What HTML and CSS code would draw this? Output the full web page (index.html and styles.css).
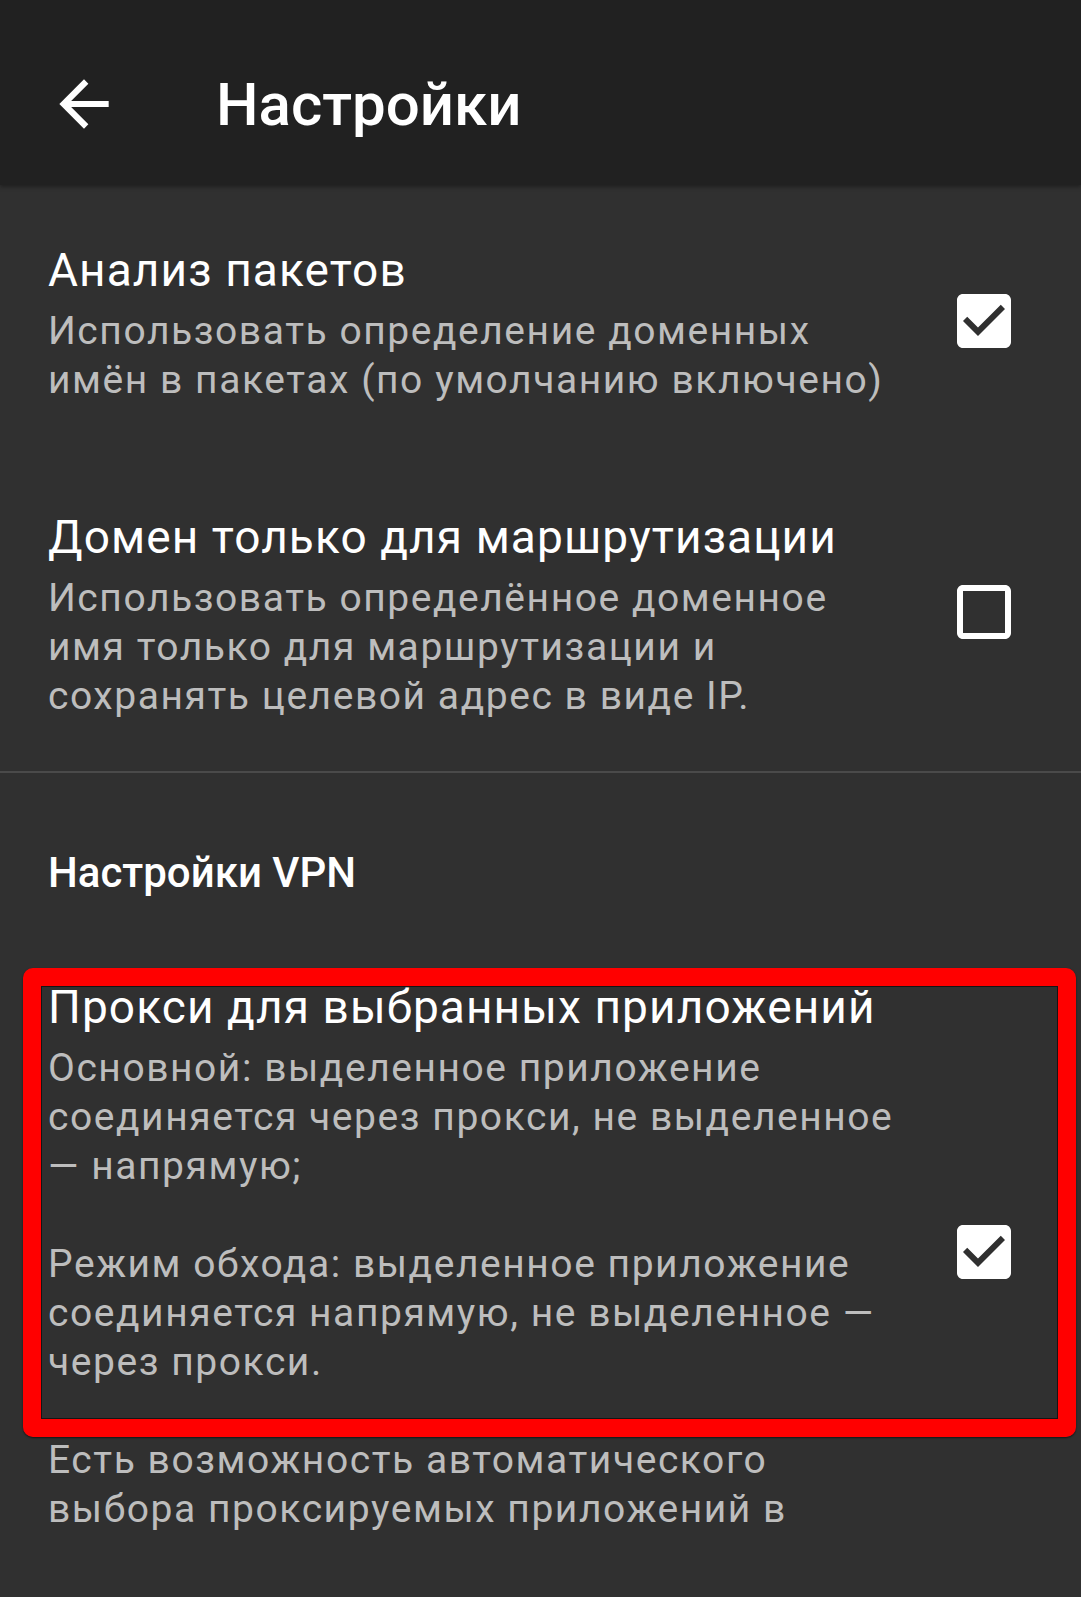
FILE: index.html
```html
<!DOCTYPE html>
<html lang="ru">
<head>
<meta charset="utf-8">
<title>Настройки</title>
<link rel="stylesheet" href="styles.css">
</head>
<body>
<div class="screen">
  <header class="toolbar">
    <span class="back" aria-label="Назад">
      <svg viewBox="0 0 24 24" width="74" height="74"><path d="M20 11H7.83l5.59-5.59L12 4l-8 8 8 8 1.41-1.41L7.83 13H20v-2z" fill="#fff"/></svg>
    </span>
    <h1 class="toolbar-title">Настройки</h1>
  </header>

  <main class="prefs">
    <div class="pref pref-first">
      <div class="pref-text">
        <div class="pref-title">Анализ пакетов</div>
        <div class="pref-summary">Использовать определение доменных имён в пакетах (по умолчанию включено)</div>
      </div>
      <svg class="checkbox" viewBox="0 0 24 24" width="72" height="72"><path fill-rule="evenodd" fill="#fff" d="M19 3H5c-1.11 0-2 .9-2 2v14c0 1.1.89 2 2 2h14c1.11 0 2-.9 2-2V5c0-1.1-.89-2-2-2zm-9 14l-5-5 1.41-1.41L10 14.17l7.59-7.59L19 8l-9 9z"/></svg>
    </div>

    <div class="pref pref-last">
      <div class="pref-text">
        <div class="pref-title">Домен только для маршрутизации</div>
        <div class="pref-summary">Использовать определённое доменное имя только для маршрутизации и сохранять целевой адрес в виде IP.</div>
      </div>
      <svg class="checkbox" viewBox="0 0 24 24" width="72" height="72"><path fill-rule="evenodd" fill="#fff" d="M19 5v14H5V5h14m0-2H5c-1.11 0-2 .9-2 2v14c0 1.1.89 2 2 2h14c1.1 0 2-.9 2-2V5c0-1.1-.9-2-2-2z"/></svg>
    </div>

    <div class="divider"></div>

    <div class="category">Настройки VPN</div>

    <div class="pref pref-tall">
      <div class="pref-text">
        <div class="pref-title">Прокси для выбранных приложений</div>
        <div class="pref-summary">
          <p class="para">Основной: выделенное приложение соединяется через прокси, не выделенное — напрямую;</p>
          <p class="para">Режим обхода: выделенное приложение соединяется напрямую, не выделенное — через прокси.</p>
          <p class="para">Есть возможность автоматического<br>выбора проксируемых приложений в</p>
        </div>
      </div>
      <svg class="checkbox checkbox-tall" viewBox="0 0 24 24" width="72" height="72"><path fill-rule="evenodd" fill="#fff" d="M19 3H5c-1.11 0-2 .9-2 2v14c0 1.1.89 2 2 2h14c1.11 0 2-.9 2-2V5c0-1.1-.89-2-2-2zm-9 14l-5-5 1.41-1.41L10 14.17l7.59-7.59L19 8l-9 9z"/></svg>
    </div>
  </main>

  <div class="highlight"></div>
</div>
</body>
</html>
```

FILE: styles.css
```css
* { box-sizing: border-box; }

html, body {
  margin: 0;
  padding: 0;
  background: #303030;
  overflow: hidden;
}

body {
  font-family: Roboto, "Noto Sans", "DejaVu Sans", sans-serif;
  color: #fff;
}

.screen {
  position: relative;
  width: 1081px;
  height: 1597px;
  overflow: hidden;
}

.toolbar {
  height: 185px;
  background: #212121;
  display: flex;
  align-items: center;
  padding: 24px 0 0 47px;
  box-shadow: 0 2px 4px rgba(0, 0, 0, 0.35);
  position: relative;
  z-index: 1;
}

.back {
  display: flex;
  width: 74px;
  height: 74px;
  margin-bottom: 2px;
}

.toolbar-title {
  margin: 0 0 0 95px;
  font-size: 60px;
  font-weight: 500;
  line-height: 1;
  color: #fff;
}

.prefs {
  display: flex;
  flex-direction: column;
}

.pref {
  display: flex;
  align-items: center;
  padding: 52px 61px 52px 48px;
}

.pref-first { padding-top: 57px; }
.pref-last { padding-bottom: 50px; }
.pref-tall { padding-top: 78px; }

.pref-text {
  width: 847px;
  flex: none;
}

.pref-title {
  font-size: 46px;
  line-height: 56px;
  letter-spacing: 1.1px;
  color: #fff;
}

.pref-summary {
  margin-top: 9px;
  font-size: 39px;
  line-height: 49px;
  letter-spacing: 1.55px;
  color: #bdbdbd;
}

.para { margin: 0; }
.para + .para { margin-top: 49px; }

.checkbox {
  flex: none;
  margin-left: auto;
  margin-bottom: 6px;
}

.checkbox-tall { margin-bottom: 10px; }

.divider {
  height: 2px;
  background: #4a4a4a;
}

.category {
  padding: 72px 48px 0;
  font-size: 42px;
  line-height: 56px;
  font-weight: 500;
  color: #fff;
}

.highlight {
  position: absolute;
  left: 23px;
  top: 968px;
  width: 1053px;
  height: 469px;
  border: 18px solid #ff0000;
  border-radius: 10px;
  box-shadow: inset 0 0 0 1px rgba(0, 0, 0, 0.55), 0 1px 2px rgba(0, 0, 0, 0.6);
  pointer-events: none;
}
```
